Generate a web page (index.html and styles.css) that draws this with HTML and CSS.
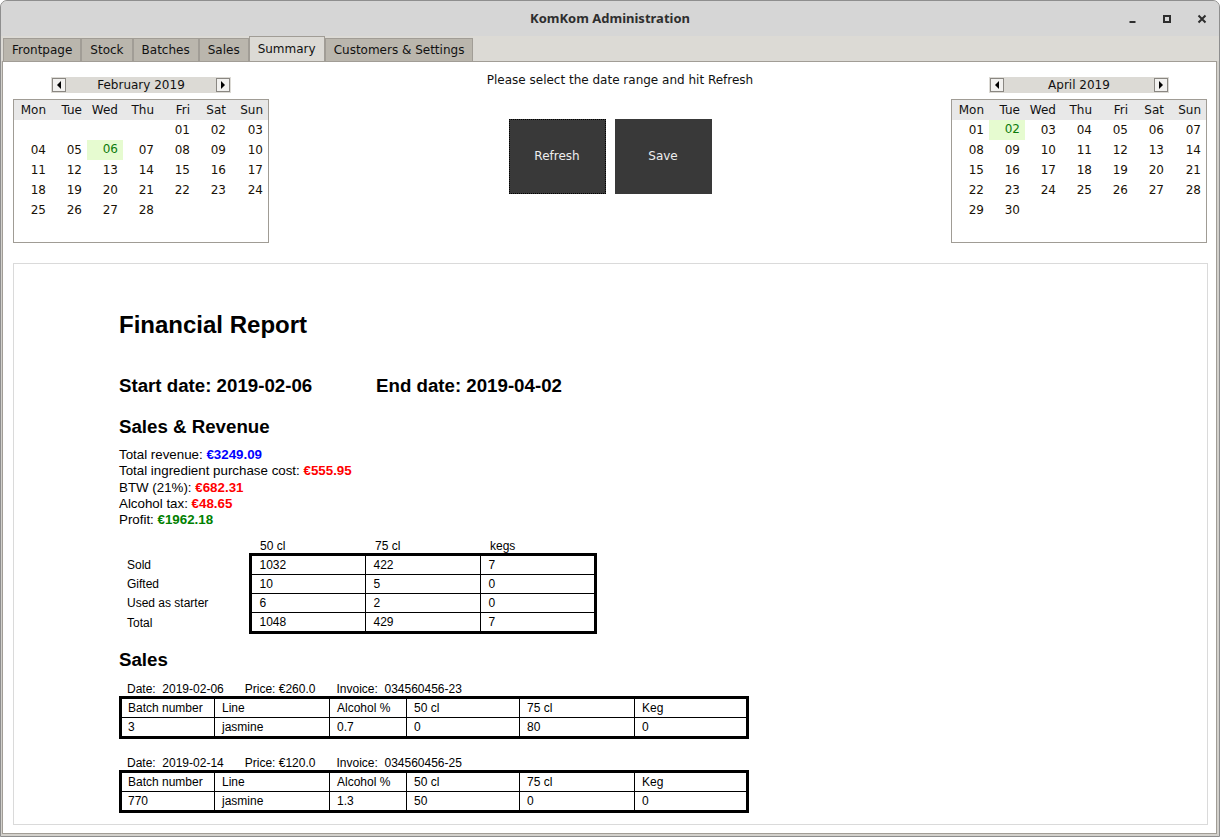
FILE: index.html
```html
<!DOCTYPE html>
<html>
<head>
<meta charset="utf-8">
<title>KomKom Administration</title>
<link rel="stylesheet" href="styles.css">
</head>
<body>
<div class="window">
  <div class="titlebar">
    <div class="spacer"></div>
    <div class="title">KomKom Administration</div>
    <div class="controls">
      <div class="ctl"><svg width="10" height="10" viewBox="0 0 10 10"><rect x="2.5" y="7" width="6" height="2" fill="#2e2e2e"/></svg></div>
      <div class="ctl"><svg width="10" height="10" viewBox="0 0 10 10"><rect x="2" y="2" width="6" height="6" fill="none" stroke="#2e2e2e" stroke-width="2"/></svg></div>
      <div class="ctl"><svg width="10" height="10" viewBox="0 0 10 10"><path d="M1.5 1.5 L8.5 8.5 M8.5 1.5 L1.5 8.5" stroke="#2e2e2e" stroke-width="2"/></svg></div>
    </div>
  </div>
  <div class="tabbar">
    <div class="tab">Frontpage</div>
    <div class="tab">Stock</div>
    <div class="tab">Batches</div>
    <div class="tab">Sales</div>
    <div class="tab active">Summary</div>
    <div class="tab">Customers &amp; Settings</div>
  </div>
  <div class="content">
    <div class="top">
      <div class="cal">
        <div class="cal-nav">
          <div class="arrow"><svg width="6" height="8" viewBox="0 0 6 8"><polygon points="5,0 5,8 1,4" fill="#000"/></svg></div>
          <div class="month">February 2019</div>
          <div class="arrow"><svg width="6" height="8" viewBox="0 0 6 8"><polygon points="1,0 1,8 5,4" fill="#000"/></svg></div>
        </div>
        <div class="cal-box">
          <div class="dh">Mon</div><div class="dh">Tue</div><div class="dh">Wed</div><div class="dh">Thu</div><div class="dh">Fri</div><div class="dh">Sat</div><div class="dh">Sun</div>
          <div class="d"></div><div class="d"></div><div class="d"></div><div class="d"></div><div class="d">01</div><div class="d">02</div><div class="d">03</div>
          <div class="d">04</div><div class="d">05</div><div class="d sel">06</div><div class="d">07</div><div class="d">08</div><div class="d">09</div><div class="d">10</div>
          <div class="d">11</div><div class="d">12</div><div class="d">13</div><div class="d">14</div><div class="d">15</div><div class="d">16</div><div class="d">17</div>
          <div class="d">18</div><div class="d">19</div><div class="d">20</div><div class="d">21</div><div class="d">22</div><div class="d">23</div><div class="d">24</div>
          <div class="d">25</div><div class="d">26</div><div class="d">27</div><div class="d">28</div><div class="d"></div><div class="d"></div><div class="d"></div>
        </div>
      </div>
      <div class="middle">
        <div class="hint">Please select the date range and hit Refresh</div>
        <div class="buttons">
          <div class="btn focus">Refresh</div>
          <div class="btn">Save</div>
        </div>
      </div>
      <div class="cal">
        <div class="cal-nav">
          <div class="arrow"><svg width="6" height="8" viewBox="0 0 6 8"><polygon points="5,0 5,8 1,4" fill="#000"/></svg></div>
          <div class="month">April 2019</div>
          <div class="arrow"><svg width="6" height="8" viewBox="0 0 6 8"><polygon points="1,0 1,8 5,4" fill="#000"/></svg></div>
        </div>
        <div class="cal-box">
          <div class="dh">Mon</div><div class="dh">Tue</div><div class="dh">Wed</div><div class="dh">Thu</div><div class="dh">Fri</div><div class="dh">Sat</div><div class="dh">Sun</div>
          <div class="d">01</div><div class="d sel">02</div><div class="d">03</div><div class="d">04</div><div class="d">05</div><div class="d">06</div><div class="d">07</div>
          <div class="d">08</div><div class="d">09</div><div class="d">10</div><div class="d">11</div><div class="d">12</div><div class="d">13</div><div class="d">14</div>
          <div class="d">15</div><div class="d">16</div><div class="d">17</div><div class="d">18</div><div class="d">19</div><div class="d">20</div><div class="d">21</div>
          <div class="d">22</div><div class="d">23</div><div class="d">24</div><div class="d">25</div><div class="d">26</div><div class="d">27</div><div class="d">28</div>
          <div class="d">29</div><div class="d">30</div><div class="d"></div><div class="d"></div><div class="d"></div><div class="d"></div><div class="d"></div>
        </div>
      </div>
    </div>
    <div class="report">
      <div class="report-inner">
        <div class="rpt-title">Financial Report</div>
        <div class="dates">
          <div class="date-start">Start date: 2019-02-06</div>
          <div>End date: 2019-04-02</div>
        </div>
        <div class="h2 h2-rev">Sales &amp; Revenue</div>
        <div class="lines">
          <div>Total revenue: <b class="blue">€3249.09</b></div>
          <div>Total ingredient purchase cost: <b class="red">€555.95</b></div>
          <div>BTW (21%): <b class="red">€682.31</b></div>
          <div>Alcohol tax: <b class="red">€48.65</b></div>
          <div>Profit: <b class="green">€1962.18</b></div>
        </div>
        <table class="qtab">
          <colgroup><col class="q-lab"><col class="q-col"><col class="q-col"><col class="q-col"></colgroup>
          <tr class="qhead"><td class="lab"></td><td>50 cl</td><td>75 cl</td><td>kegs</td></tr>
          <tr class="first"><td class="lab">Sold</td><td class="l">1032</td><td>422</td><td class="r">7</td></tr>
          <tr><td class="lab">Gifted</td><td class="l">10</td><td>5</td><td class="r">0</td></tr>
          <tr><td class="lab">Used as starter</td><td class="l">6</td><td>2</td><td class="r">0</td></tr>
          <tr class="last"><td class="lab">Total</td><td class="l">1048</td><td>429</td><td class="r">7</td></tr>
        </table>
        <div class="h2 h2-sales">Sales</div>
        <div class="sale">
          <div class="sale-meta"><span>Date:  2019-02-06</span><span>Price: €260.0</span><span>Invoice:  034560456-23</span></div>
          <table class="stab">
            <colgroup><col class="s1"><col class="s2"><col class="s3"><col class="s4"><col class="s5"><col class="s6"></colgroup>
            <tr><td>Batch number</td><td>Line</td><td>Alcohol %</td><td>50 cl</td><td>75 cl</td><td>Keg</td></tr>
            <tr><td>3</td><td>jasmine</td><td>0.7</td><td>0</td><td>80</td><td>0</td></tr>
          </table>
        </div>
        <div class="sale sale-next">
          <div class="sale-meta"><span>Date:  2019-02-14</span><span>Price: €120.0</span><span>Invoice:  034560456-25</span></div>
          <table class="stab">
            <colgroup><col class="s1"><col class="s2"><col class="s3"><col class="s4"><col class="s5"><col class="s6"></colgroup>
            <tr><td>Batch number</td><td>Line</td><td>Alcohol %</td><td>50 cl</td><td>75 cl</td><td>Keg</td></tr>
            <tr><td>770</td><td>jasmine</td><td>1.3</td><td>50</td><td>0</td><td>0</td></tr>
          </table>
        </div>
      </div>
    </div>
  </div>
</div>
</body>
</html>
```
FILE: styles.css
```css
html, body {
  margin: 0;
  padding: 0;
  background: #ffffff;
}

.window {
  width: 1220px;
  height: 837px;
  box-sizing: border-box;
  border: 1px solid #8e8e8e;
  border-radius: 7px 7px 0 0;
  background: #d3d1cc;
  display: flex;
  flex-direction: column;
  overflow: hidden;
  font-family: "DejaVu Sans", sans-serif;
  font-size: 12px;
  color: #000;
}

/* title bar */
.titlebar {
  height: 35px;
  flex: none;
  background: #d6d6d6;
  display: grid;
  grid-template-columns: 1fr auto 1fr;
  align-items: center;
}
.title {
  font-family: "Noto Sans", "DejaVu Sans", sans-serif;
  font-weight: bold;
  font-size: 13px;
  color: #2e2e2e;
  margin-top: -1px;
}
.controls {
  justify-self: end;
  display: flex;
}
.ctl {
  width: 35px;
  height: 35px;
  display: flex;
  align-items: center;
  justify-content: center;
}

/* tabs */
.tabbar {
  height: 25px;
  flex: none;
  background: #dcdad5;
  display: flex;
  align-items: flex-end;
  padding-left: 2px;
}
.tab {
  height: 23px;
  box-sizing: border-box;
  border: 1px solid #a19d96;
  border-bottom: none;
  background: #bab6ad;
  padding: 1px 8px 0;
  line-height: 21px;
  color: #111;
}
.tab.active {
  height: 25px;
  background: #dcdad5;
  padding-top: 2px;
  line-height: 21px;
}

/* content */
.content {
  flex: 1;
  margin: 0 2px 2px 1px;
  border: 1px solid #a19d96;
  background: #fff;
  display: flex;
  flex-direction: column;
  min-height: 0;
}
.top {
  display: flex;
  padding: 15px 9px 0 10px;
}

/* calendar */
.cal {
  width: 256px;
  flex: none;
}
.cal-nav {
  width: 180px;
  height: 16px;
  margin: 0 auto;
  background: #dcdad5;
  display: flex;
  align-items: center;
  justify-content: space-between;
  padding: 0 1px;
  box-sizing: border-box;
}
.arrow {
  width: 14px;
  height: 14px;
  box-sizing: border-box;
  border: 1px solid #8a8782;
  background: #f2f1ef;
  display: flex;
  align-items: center;
  justify-content: center;
}
.month {
  line-height: 16px;
  color: #111;
}
.cal-box {
  margin-top: 6px;
  border: 1px solid #a09c95;
  padding-bottom: 2px;
  display: grid;
  grid-template-columns: 37px repeat(5, 36px) 37px;
  grid-template-rows: repeat(7, 20px);
}
.dh, .d {
  text-align: right;
  padding-right: 5px;
  line-height: 20px;
}
.dh {
  background: #e8e8e8;
  color: #111;
}
.d {
  color: #1a1206;
}
.d.sel {
  background: #e6fbd0;
  color: #0c7a0c;
  line-height: 18px;
}

/* middle */
.middle {
  flex: 1;
  display: flex;
  flex-direction: column;
  align-items: center;
}
.hint {
  margin-top: -4px;
  padding-left: 20px;
  line-height: 15px;
  color: #111;
}
.buttons {
  display: flex;
  gap: 9px;
  margin-top: 31px;
}
.btn {
  width: 97px;
  height: 75px;
  box-sizing: border-box;
  background: #393939;
  border: 1px solid #393939;
  color: #eeeeee;
  display: flex;
  align-items: center;
  justify-content: center;
  padding-bottom: 2px;
}
.btn.focus {
  border: 1px dotted #000;
}

/* report */
.report {
  flex: 1;
  margin: 20px 8px 8px 10px;
  border: 1px solid #dadada;
  min-height: 0;
  overflow: hidden;
}
.report-inner {
  padding: 47px 0 0 105px;
  font-family: "Liberation Sans", Arial, sans-serif;
  color: #000;
}
.rpt-title {
  font-weight: bold;
  font-size: 24px;
  line-height: 28px;
}
.dates {
  display: flex;
  margin-top: 36px;
  font-weight: bold;
  font-size: 18.7px;
  line-height: 22px;
}
.date-start {
  width: 257px;
}
.h2 {
  font-weight: bold;
  font-size: 18.7px;
  line-height: 22px;
}
.h2-rev {
  margin-top: 19px;
}
.lines {
  margin-top: 9px;
  font-size: 13.33px;
  line-height: 16.3px;
}
.blue { color: #0000ff; }
.red { color: #ff0000; }
.green { color: #008000; }

/* quantities table */
.qtab {
  margin-top: 11px;
  border-collapse: collapse;
  table-layout: fixed;
  width: 476px;
  font-size: 12px;
}
.q-lab { width: 131px; }
.q-col { width: 115px; }
.qtab td {
  border: 1px solid #000;
  height: 18px;
  padding: 0 8px;
  line-height: 14px;
}
.qtab td.lab {
  border: none;
  padding-left: 8px;
}
.qtab .qhead td {
  border: none;
  height: 14px;
  padding-left: 10px;
}
.qtab td.l { border-left: 3px solid #000; }
.qtab td.r { border-right: 3px solid #000; }
.qtab tr.first td:not(.lab) { border-top: 3px solid #000; }
.qtab tr.last td:not(.lab) { border-bottom: 3px solid #000; }

/* sales */
.h2-sales {
  margin-top: 15px;
}
.sale {
  margin-top: 11px;
}
.sale-next {
  margin-top: 17px;
}
.sale-meta {
  display: flex;
  gap: 21px;
  padding-left: 8px;
  white-space: pre;
  font-size: 12px;
  line-height: 14px;
}
.stab {
  border-collapse: collapse;
  table-layout: fixed;
  width: 627px;
  border: 3px solid #000;
  font-size: 12px;
}
.s1 { width: 94px; }
.s2 { width: 115px; }
.s3 { width: 77px; }
.s4 { width: 113px; }
.s5 { width: 115px; }
.s6 { width: 113px; }
.stab td {
  border: 1px solid #000;
  height: 18px;
  padding: 0 7px;
  line-height: 14px;
}
.stab tr:first-child td { border-top: 3px solid #000; }
.stab tr:last-child td { border-bottom: 3px solid #000; }
.stab td:first-child { border-left: 3px solid #000; padding-left: 6px; }
.stab td:last-child { border-right: 3px solid #000; }
```
